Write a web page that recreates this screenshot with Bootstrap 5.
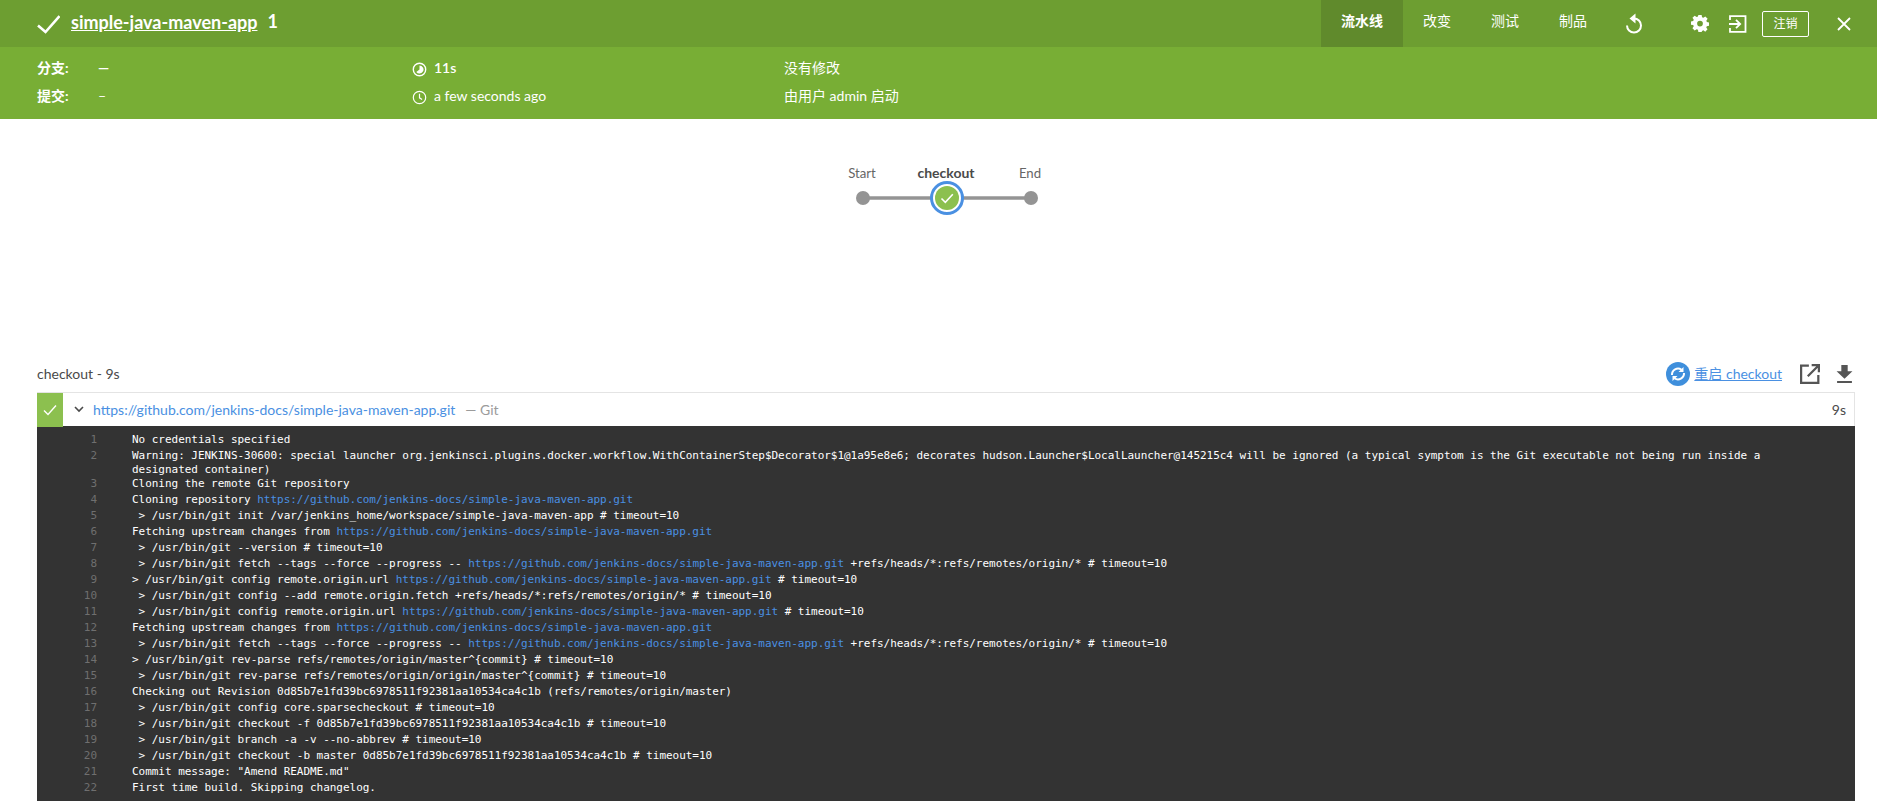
<!DOCTYPE html>
<html lang="zh">
<head>
<meta charset="utf-8">
<title>simple-java-maven-app</title>
<link href="https://cdn.jsdelivr.net/npm/bootstrap@5.3.0/dist/css/bootstrap.min.css" rel="stylesheet">
<style>
html,body{height:100%;overflow:hidden}
body{font-family:Lato,"Noto Sans CJK SC",sans-serif;font-size:14px;color:#4a4a4a;background:#fff}
.top-strip{height:47px;background:#6d9e31;color:#fff}
.ok-tick{margin-left:36px;margin-right:11px}
.job-link{color:#fff;font-size:18px;font-weight:700;line-height:1;margin-bottom:4px}
.job-link:hover{color:#fff}
.run-num{color:#fff;font-size:18px;font-weight:700;margin-left:10px;margin-bottom:4px}
.tab-item{height:47px;padding:0 20px;color:#fff;font-size:14px;line-height:42px;text-decoration:none}
.tab-item.on{background:#608a2c;font-weight:700}
.btn-logout{height:26px;width:47px;padding:0;border:1px solid #fff;border-radius:2px;color:#fff;font-size:12px;background:transparent;line-height:24px}
.btn-logout:hover{color:#fff}
.tool-icons{padding-right:26px;height:47px}
.ico-reload{margin-left:18px}
.ico-gear{margin-left:47px}
.ico-exit{margin-left:19px}
.btn-logout{margin-left:15px}
.ico-close{margin-left:28px}
.info-strip{height:72px;background:#78ae35;color:#fff;font-size:14px;padding:7px 0 0 37px}
.info-row{height:27.600px;line-height:27.600px}
.lab{width:61px;font-weight:700}
.val{width:314px}
.val-t{width:350px}
.mid-ico{width:22px}
.pipe-area{height:240px}
.step-title{padding:0 24px 4px 37px;height:33px;font-size:14px;color:#4a4a4a}
.restart-link{color:#4a90e2;text-decoration:underline;font-size:14px}
.ico-ext{margin-left:18px}
.ico-down{margin-left:16px}
.log-wrap{margin:0 22px 0 37px}
.log-head{height:34px;border:1px solid #e4e4e4;border-left:0;border-bottom:0;font-size:14px}
.ok-box{width:26px;height:34px;background:#8cc04f}
.chev{margin-left:11px;margin-right:9px}
.url-link{color:#4a90e2;text-decoration:none}
.git-tag{color:#9b9b9b;margin-left:10px}
.dur{padding-right:8px;color:#4a4a4a}
.log-body{background:#333;color:#fff;height:375px;padding:7px 0 0;font-family:"DejaVu Sans Mono","Liberation Mono",monospace;font-size:11px;line-height:14px;letter-spacing:-.03px}
.log-line{display:flex;min-height:16px}
.ln{width:60px;flex:none;text-align:right;color:#6f6f6f;margin-right:35px}
.lt{flex:1;padding-right:50px;white-space:pre-wrap;word-break:break-word}
.lt a{color:#4a90e2;text-decoration:none}
</style>
</head>
<body>
<header class="top-strip d-flex align-items-center">
  <svg class="ok-tick" width="24" height="24" viewBox="0 0 24 24"><path d="M2 13.500 L9.500 20 L23.500 4" fill="none" stroke="#fff" stroke-width="2.600"/></svg>
  <a href="#" class="job-link">simple-java-maven-app</a>
  <span class="run-num">1</span>
  <div class="ms-auto d-flex align-items-center tool-icons">
    <a href="#" class="tab-item on">流水线</a>
    <a href="#" class="tab-item">改变</a>
    <a href="#" class="tab-item">测试</a>
    <a href="#" class="tab-item">制品</a>
    <svg class="ico-reload" width="18" height="22" viewBox="0 1 18 22"><path d="M9 6.500A7 7 0 1 1 2 13.500" fill="none" stroke="#fff" stroke-width="2"/><path d="M10.500 1.500 4.500 6.500l6 5z" fill="#fff"/></svg>
    <svg class="ico-gear" width="20" height="20" viewBox="0 0 20 20"><path fill="#fff" fill-rule="evenodd" d="M8 0h4l.5 2.800 1.600.7L16.500 2l2.800 2.800-1.600 2.300.7 1.700 2.600.4v4l-2.700.5-.7 1.600 1.600 2.300-2.800 2.800-2.300-1.600-1.600.7L12 21H8l-.5-2.800-1.600-.7-2.400 1.500L.8 16.200l1.600-2.300-.7-1.600L-1 12V8l2.700-.5.7-1.700L.8 3.500 3.500 1l2.400 1.500 1.600-.7zM10 7a3.500 3.500 0 1 0 0 7 3.500 3.500 0 0 0 0-7z" transform="translate(1.800 .9) scale(.82)"/></svg>
    <svg class="ico-exit" width="18" height="18" viewBox="0 0 18 18"><path d="M1 5V1.200h15.500v15.600H1V13" fill="none" stroke="#fff" stroke-width="1.800"/><path d="M0 9h10M7 4.800 11.200 9 7 13.200" fill="none" stroke="#fff" stroke-width="1.800"/></svg>
    <button class="btn btn-logout">注销</button>
    <svg class="ico-close" width="14" height="14" viewBox="0 0 14 14"><path d="M1 1 13 13M13 1 1 13" stroke="#fff" stroke-width="1.800"/></svg>
  </div>
</header>
<section class="info-strip">
  <div class="d-flex info-row">
    <div class="lab">分支:</div><div class="val"><b>—</b></div>
    <div class="mid-ico"><svg width="15" height="15" viewBox="0 0 15 15"><circle cx="7.500" cy="7.500" r="6.200" fill="none" stroke="#fff" stroke-width="1.400"/><path d="M7.500 3.500a4 4 0 1 1-3.200 6.400L7.500 7.500z" fill="#fff"/></svg></div>
    <div class="val-t fw-semibold">11s</div><div>没有修改</div>
  </div>
  <div class="d-flex info-row">
    <div class="lab">提交:</div><div class="val">–</div>
    <div class="mid-ico"><svg width="15" height="15" viewBox="0 0 15 15"><circle cx="7.500" cy="7.500" r="6.200" fill="none" stroke="#fff" stroke-width="1.200"/><path d="M7.500 3.800v4l2.600 1.600" fill="none" stroke="#fff" stroke-width="1.200"/></svg></div>
    <div class="val-t">a few seconds ago</div><div>由用户 admin 启动</div>
  </div>
</section>
<section class="pipe-area">
  <svg width="1877" height="240" viewBox="0 119 1877 240" style="display:block;font-family:Lato,sans-serif;font-size:13.200px">
    <line x1="863" y1="198" x2="1031" y2="198" stroke="#949494" stroke-width="3.500"/>
    <circle cx="863" cy="198" r="7" fill="#949494"/>
    <circle cx="1031" cy="198" r="7" fill="#949494"/>
    <circle cx="947" cy="198" r="15.500" fill="#fff" stroke="#4a90e2" stroke-width="3"/>
    <circle cx="947" cy="198" r="12" fill="#8cc04f"/>
    <path d="M941.500 198.500l3.800 3.800 7.500-8" fill="none" stroke="#fff" stroke-width="1.600"/>
    <text x="862" y="178" text-anchor="middle" fill="#666">Start</text>
    <text x="946" y="178" text-anchor="middle" fill="#4a4a4a" font-weight="700" font-size="14">checkout</text>
    <text x="1030" y="178" text-anchor="middle" fill="#666">End</text>
  </svg>
</section>
<div class="step-title d-flex align-items-center">
  <span>checkout - 9s</span>
  <div class="ms-auto d-flex align-items-center">
    <span class="d-flex align-items-center gap-1">
      <svg width="24" height="24" viewBox="0 0 24 24"><circle cx="12" cy="12" r="12" fill="#3f8fdc"/><path d="M6 13a6 6 0 0 1 9.500-5.200M18 11a6 6 0 0 1-9.500 5.200" fill="none" stroke="#fff" stroke-width="2"/><path d="M17.500 5v5h-5zM6.500 19v-5h5z" fill="#fff"/></svg>
      <a href="#" class="restart-link">重启 checkout</a>
    </span>
    <svg class="ico-ext" width="20" height="20" viewBox="0 0 18 18"><path d="M8 1.500H1v15.500h15.500V10" fill="none" stroke="#555" stroke-width="2"/><path d="M7 11 16 2M10.500 1H17v6.500" fill="none" stroke="#555" stroke-width="2"/></svg>
    <svg class="ico-down" width="17" height="18" viewBox="0 0 16 17"><path d="M5 0h6v6h4.500L8 13 .5 6H5zM1 15h14v2H1z" fill="#555"/></svg>
  </div>
</div>
<main class="log-wrap">
  <div class="log-head d-flex align-items-center">
    <div class="ok-box d-flex align-items-center justify-content-center"><svg width="14" height="12" viewBox="0 0 14 12"><path d="M1 6.500l4 4L13 1.500" fill="none" stroke="#fff" stroke-width="1.400"/></svg></div>
    <svg class="chev" width="10" height="7" viewBox="0 0 10 7"><path d="M1 1l4 4 4-4" fill="none" stroke="#4a4a4a" stroke-width="1.600"/></svg>
    <a href="#" class="url-link">https://github.com/jenkins-docs/simple-java-maven-app.git</a>
    <span class="git-tag">— Git</span>
    <span class="ms-auto dur">9s</span>
  </div>
  <div class="log-body" id="logbox"></div>
</main>
<script src="https://cdn.jsdelivr.net/npm/bootstrap@5.3.0/dist/js/bootstrap.bundle.min.js"></script>
<script>
var U='<a href="#">https://github.com/jenkins-docs/simple-java-maven-app.git</a>';
var L=['No credentials specified',
'Warning: JENKINS-30600: special launcher org.jenkinsci.plugins.docker.workflow.WithContainerStep$Decorator$1@1a95e8e6; decorates hudson.Launcher$LocalLauncher@145215c4 will be ignored (a typical symptom is the Git executable not being run inside a designated container)',
'Cloning the remote Git repository',
'Cloning repository '+U,
' > /usr/bin/git init /var/jenkins_home/workspace/simple-java-maven-app # timeout=10',
'Fetching upstream changes from '+U,
' > /usr/bin/git --version # timeout=10',
' > /usr/bin/git fetch --tags --force --progress -- '+U+' +refs/heads/*:refs/remotes/origin/* # timeout=10',
'> /usr/bin/git config remote.origin.url '+U+' # timeout=10',
' > /usr/bin/git config --add remote.origin.fetch +refs/heads/*:refs/remotes/origin/* # timeout=10',
' > /usr/bin/git config remote.origin.url '+U+' # timeout=10',
'Fetching upstream changes from '+U,
' > /usr/bin/git fetch --tags --force --progress -- '+U+' +refs/heads/*:refs/remotes/origin/* # timeout=10',
'> /usr/bin/git rev-parse refs/remotes/origin/master^{commit} # timeout=10',
' > /usr/bin/git rev-parse refs/remotes/origin/origin/master^{commit} # timeout=10',
'Checking out Revision 0d85b7e1fd39bc6978511f92381aa10534ca4c1b (refs/remotes/origin/master)',
' > /usr/bin/git config core.sparsecheckout # timeout=10',
' > /usr/bin/git checkout -f 0d85b7e1fd39bc6978511f92381aa10534ca4c1b # timeout=10',
' > /usr/bin/git branch -a -v --no-abbrev # timeout=10',
' > /usr/bin/git checkout -b master 0d85b7e1fd39bc6978511f92381aa10534ca4c1b # timeout=10',
'Commit message: "Amend README.md"',
'First time build. Skipping changelog.'];
document.getElementById('logbox').innerHTML=L.map(function(t,i){return '<div class="log-line"><span class="ln">'+(i+1)+'</span><span class="lt">'+t+'</span></div>';}).join('');
</script>
</body>
</html>
